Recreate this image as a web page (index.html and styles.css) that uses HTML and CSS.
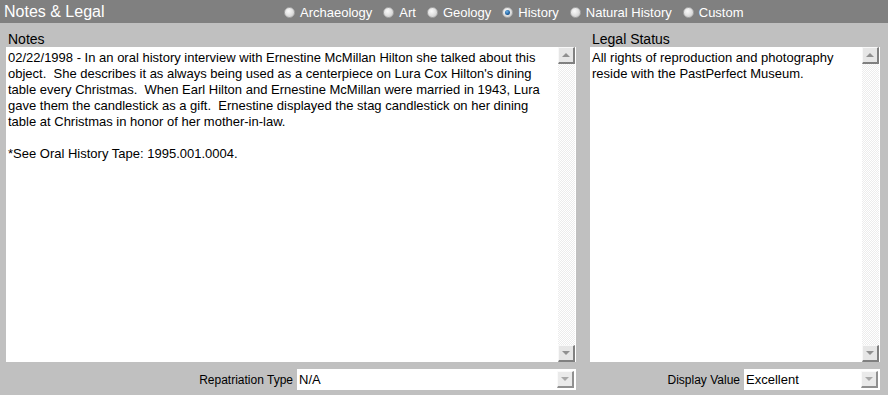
FILE: index.html
```html
<!DOCTYPE html>
<html lang="en">
<head>
    <meta charset="UTF-8">
    <title>Notes &amp; Legal</title>
    <link rel="stylesheet" href="styles.css">
</head>
<body>
    <div class="topbar">
        <div class="title">Notes &amp; Legal</div>
        <div class="modes">
            <label class="mode"><span class="radio"></span>Archaeology</label>
            <label class="mode"><span class="radio"></span>Art</label>
            <label class="mode"><span class="radio"></span>Geology</label>
            <label class="mode"><span class="radio checked"></span>History</label>
            <label class="mode"><span class="radio"></span>Natural History</label>
            <label class="mode"><span class="radio"></span>Custom</label>
        </div>
    </div>
    <div class="panels">
        <div class="panel notes">
            <div class="panel-label">Notes</div>
            <div class="memo">
                <div class="memo-text">02/22/1998 - In an oral history interview with Ernestine McMillan Hilton she talked about this
object.  She describes it as always being used as a centerpiece on Lura Cox Hilton's dining
table every Christmas.  When Earl Hilton and Ernestine McMillan were married in 1943, Lura
gave them the candlestick as a gift.  Ernestine displayed the stag candlestick on her dining
table at Christmas in honor of her mother-in-law.

*See Oral History Tape: 1995.001.0004.</div>
                <div class="scrollbar">
                    <div class="sb-btn"><span class="arrow up"></span></div>
                    <div class="sb-track"></div>
                    <div class="sb-btn"><span class="arrow down"></span></div>
                </div>
            </div>
            <div class="field">
                <span class="field-label">Repatriation Type</span>
                <div class="combo wide">
                    <span class="combo-value">N/A</span>
                    <div class="combo-btn"><span class="arrow down light"></span></div>
                </div>
            </div>
        </div>
        <div class="panel legal">
            <div class="panel-label">Legal Status</div>
            <div class="memo">
                <div class="memo-text">All rights of reproduction and photography
reside with the PastPerfect Museum.</div>
                <div class="scrollbar">
                    <div class="sb-btn"><span class="arrow up"></span></div>
                    <div class="sb-track"></div>
                    <div class="sb-btn"><span class="arrow down"></span></div>
                </div>
            </div>
            <div class="field">
                <span class="field-label">Display Value</span>
                <div class="combo narrow">
                    <span class="combo-value">Excellent</span>
                    <div class="combo-btn"><span class="arrow down light"></span></div>
                </div>
            </div>
        </div>
    </div>
</body>
</html>
```

FILE: styles.css
```css
body {
    font-family: "Liberation Sans", Arial, sans-serif;
    background-color: #c0c0c0;
    margin: 0;
    padding: 0;
    width: 888px;
    height: 395px;
    overflow: hidden;
}
.topbar {
    display: flex;
    align-items: center;
    height: 23px;
    background-color: #808080;
    color: #fff;
    padding-left: 4px;
}
.topbar .title {
    font-size: 16px;
    width: 280px;
}
.modes {
    display: flex;
    align-items: center;
    font-size: 13px;
    padding-top: 1px;
}
.mode {
    display: flex;
    align-items: center;
    margin-right: 11px;
}
.radio {
    width: 11px;
    height: 11px;
    border-radius: 50%;
    box-sizing: border-box;
    border: 1px solid #a8a8a8;
    background: radial-gradient(circle at 40% 35%, #fafafa 0, #e4e4e4 45%, #c4c4c4 100%);
    margin-right: 5px;
    position: relative;
}
.radio.checked::after {
    content: "";
    position: absolute;
    left: 2px;
    top: 2px;
    width: 5px;
    height: 5px;
    border-radius: 50%;
    background: radial-gradient(circle at 40% 35%, #6fb3e8 0, #1c5d9c 60%, #0b2f5a 100%);
}
.panels {
    display: flex;
    padding: 0 8px 0 6px;
    gap: 14px;
}
.panel {
    display: flex;
    flex-direction: column;
}
.panel.notes {
    width: 570px;
}
.panel.legal {
    width: 290px;
}
.panel-label {
    font-size: 14px;
    color: #000;
    height: 24px;
    line-height: 18px;
    padding-top: 7px;
    box-sizing: border-box;
    padding-left: 2px;
}
.memo {
    display: flex;
    height: 315px;
    background-color: #fff;
}
.memo-text {
    flex: 1;
    white-space: pre;
    font-size: 13px;
    line-height: 16px;
    padding: 3px 0 0 2px;
    color: #000;
    overflow: hidden;
}
.scrollbar {
    width: 17px;
    margin-right: 1px;
    display: flex;
    flex-direction: column;
}
.sb-track {
    flex: 1;
    background: repeating-conic-gradient(#ececec 0 25%, #fff 0 50%) 0 0 / 2px 2px;
}
.sb-btn {
    height: 17px;
    box-sizing: border-box;
    background-color: #e6e6e6;
    border-top: 1px solid #f8f8f8;
    border-left: 1px solid #f8f8f8;
    border-right: 2px solid #808080;
    border-bottom: 2px solid #808080;
    display: flex;
    align-items: center;
    justify-content: center;
}
.arrow {
    width: 0;
    height: 0;
    border-left: 4px solid transparent;
    border-right: 4px solid transparent;
}
.arrow.up {
    border-bottom: 4px solid #909090;
}
.arrow.down {
    border-top: 4px solid #909090;
}
.arrow.down.light {
    border-top-color: #a8a8a8;
}
.field {
    display: flex;
    justify-content: flex-end;
    align-items: center;
    margin-top: 7px;
}
.field-label {
    font-size: 12px;
    color: #000;
    margin-right: 4px;
}
.combo {
    display: flex;
    align-items: center;
    height: 21px;
    background-color: #fff;
}
.combo.wide {
    width: 279px;
}
.combo.narrow {
    width: 136px;
}
.combo-value {
    flex: 1;
    font-size: 13px;
    padding-left: 2px;
    color: #000;
}
.combo-btn {
    width: 17px;
    height: 17px;
    margin-right: 2px;
    box-sizing: border-box;
    background-color: #eaeaea;
    border-top: 1px solid #fafafa;
    border-left: 1px solid #fafafa;
    border-right: 2px solid #909090;
    border-bottom: 2px solid #909090;
    display: flex;
    align-items: center;
    justify-content: center;
}
```
